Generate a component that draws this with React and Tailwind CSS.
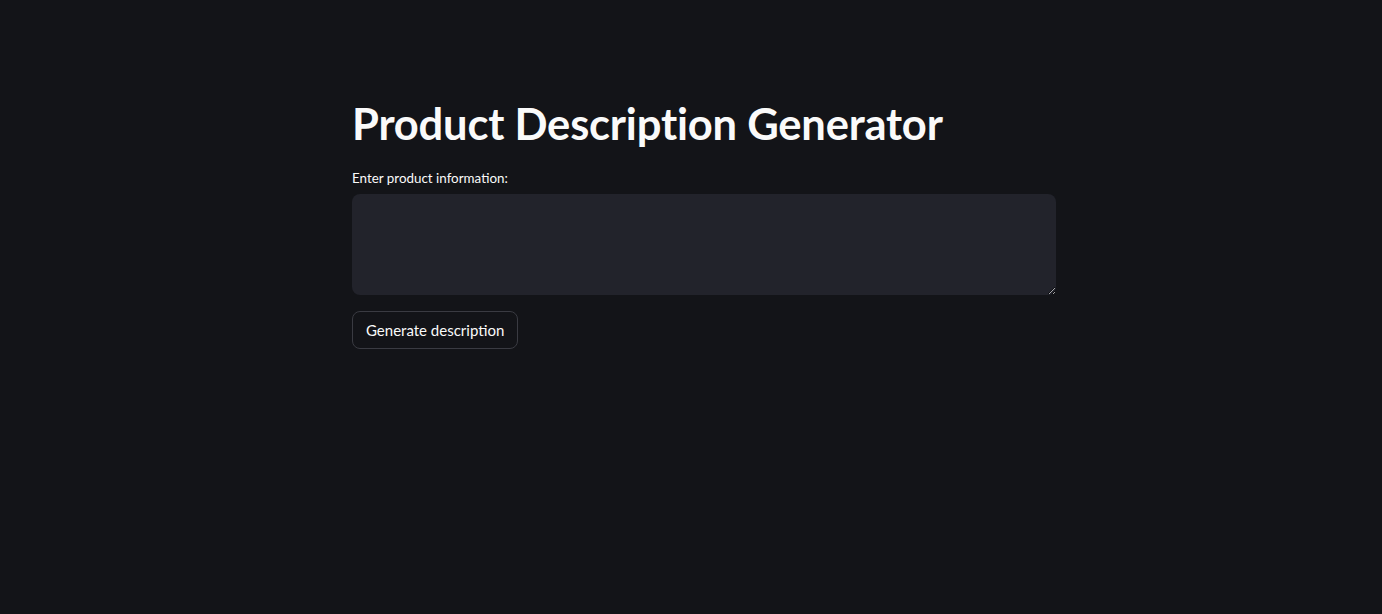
export default function App() {
  return (
    <div className="min-h-[614px] w-full bg-[#131418] text-[#fafafa] font-['Lato','Noto_Sans',sans-serif]">
      <div className="flex justify-center pl-[26px] pt-[96px]">
        <div className="w-[704px] flex flex-col">
          <h1 className="text-[43.5px] leading-[54px] font-bold tracking-[-0.2px]">
            Product Description Generator
          </h1>
          <label className="mt-[18px] text-[13.4px] leading-[20px]">Enter product information:</label>
          <textarea
            className="mt-[6px] h-[101px] w-full rounded-[8px] bg-[#22232b] text-[#fafafa] outline-none px-3 py-2 resize-y"
          />
          <div className="mt-[16px]">
            <button className="h-[38px] px-[13px] rounded-[8px] border border-[#3a3b42] bg-[#131418] text-[15px] text-[#fafafa]">
              Generate description
            </button>
          </div>
        </div>
      </div>
    </div>
  );
}
